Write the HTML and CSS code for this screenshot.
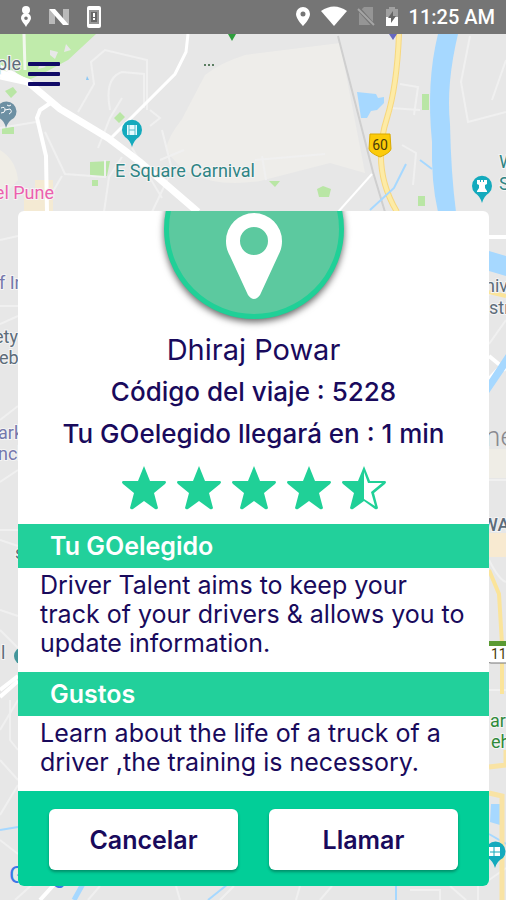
FILE: index.html
```html
<!DOCTYPE html>
<html lang="es">
<head>
    <meta charset="UTF-8">
    <meta name="viewport" content="width=device-width, initial-scale=1.0">
    <title>Tu GOelegido</title>
    <link rel="stylesheet" href="styles.css">
</head>
<body>
    <div class="statusbar">
        <div class="status-left">
            <svg width="12" height="24" viewBox="0 0 12 24" fill="#fff">
                <circle cx="6" cy="5" r="4"/>
                <path fill-rule="evenodd" d="M6 8a5 5 0 0 0-5 5c0 3 3 5 5 9 2-4 5-6 5-9a5 5 0 0 0-5-5zm0 3.500a1.800 1.800 0 1 1 0 3.600 1.800 1.800 0 0 1 0-3.600z"/>
            </svg>
            <svg width="22" height="24" viewBox="0 0 22 24">
                <path d="M1 5h6v14H1zM15 4h6v15h-6z" fill="#b9b9b9"/>
                <path d="M1 4h6l14 16h-6z" fill="#fff"/>
            </svg>
            <svg width="16" height="24" viewBox="0 0 16 24">
                <rect x="1" y="1" width="14" height="22" rx="2" fill="#fff"/>
                <path d="M3 5h10v14H3z" fill="#959595"/>
                <path d="M5 7h6v10H5z" fill="#666"/>
                <path d="M7 8h2v4H7zM7 13h2v2H7z" fill="#fff"/>
            </svg>
        </div>
        <div class="status-right">
            <svg width="16" height="22" viewBox="0 0 16 22">
                <path fill="#fff" fill-rule="evenodd" d="M8 1a7 7 0 0 0-7 7c0 5 7 12 7 12s7-7 7-12a7 7 0 0 0-7-7zm0 4.500a2.500 2.500 0 1 1 0 5 2.500 2.500 0 0 1 0-5z"/>
            </svg>
            <svg width="26" height="22" viewBox="0 0 26 22">
                <path fill="#fff" d="M0 5q13-9 26 0L13 20z"/>
            </svg>
            <svg width="18" height="22" viewBox="0 0 18 22">
                <path fill="#959595" d="M7 1h9v18H2V6z"/>
                <path d="M0 1l17 19" stroke="#757575" stroke-width="4"/>
                <path d="M1 3l16 16" stroke="#a5a5a5" stroke-width="2"/>
            </svg>
            <svg width="14" height="22" viewBox="0 0 14 22">
                <path fill="#a0a0a0" d="M4 1h6v2h3v8H1V3h3z"/>
                <path fill="#fff" d="M1 11h12v9H1z"/>
                <path fill="#666" d="M8 5l-5 7h3v5l5-7H8z"/>
            </svg>
            <span>11:25 AM</span>
        </div>
    </div>

    <div class="content">
        <svg class="map" viewBox="0 34 506 866" preserveAspectRatio="xMidYMin slice">
            <rect y="34" width="506" height="866" fill="#e7e7e7"/>
            <path d="M205 75q15-12 40-20l95-12 25 130-35-10-70 18q-70 10-94-32 2-12 16-30z" fill="#eeedea"/>
            <path d="M0 150q16 10 18 30l-18 20z" fill="#efede6"/>
            <path d="M35 180h18v32H24v-20h11z" fill="#f4ead3"/>
            <path d="M0 34h96L68 60 42 74 24 82 14 70 0 72z" fill="#c0ebab"/>
            <path d="M50 50l8 2-3 7-5-4zM66 44l5 6-7 2zM40 63l6 4-8 2z" fill="#e8e8e8"/>
            <path d="M5 91l8-4 4 5-6 6zM114 118l6-6 5 5-6 6zM90 162l20-1-3 15-17 1zM92 180h6v6h-6zM2 127h12v7H2zM269 181h11l-5 6zM317 189l6-3 8 3-2 8h-10zM422 94h7v16h-7zM418 196h7v10h-7z" fill="#b9e6a5"/>

            <g fill="none" stroke="#f0f0f0" stroke-width="2">
                <path d="M78 112l16-28-3-22 14-12 42 10v50M110 110q-6-32 12-38l22 2v34M98 148l12-30 12-20M0 128l36-6M45 132l20 42 40 3v-17M48 200l14-24M132 148l30 50M104 212l5-35 13-20M162 130l10 40-20 42M184 150l-24 10M150 110l10 8-10 8M255 160l70-6M262 156l4 24M400 84l18 3-4 28M390 108l30 2M402 145l14 8-3 32M470 36l-9 46 7 40 38-10M506 60l-14 40"/>
                <path d="M0 240l18-4M0 306h18M0 324l18-8M0 420l18-14M0 482l18-12M0 530h18M0 540l18 6M0 610l18 6M0 630l18 18M0 730l18-30M0 760l18 20M0 815l18-30M0 840l18 14M10 700v40l8 10"/>
                <path d="M489 270h17M489 295l17-10M489 344l17-24M489 480h17M489 560q10 20 17 22M489 690h17M489 880l17-12"/>
                <path d="M15 900l20-18M100 886l-12 14M176 886l4 14M220 900l14-14M300 886l-4 14M320 900l12-14M410 890h30v10M450 886l16 14M478 886v14"/>
            </g>
            <path d="M24 34l1 36" stroke="#f2f8ee" stroke-width="3"/>
            <path d="M0 78l28 6M0 66l34 18M188 34l-2 18-11 22-64 64" fill="none" stroke="#fff" stroke-width="3"/>
            <path d="M52 102l-12 8-3 8 9 38 1 56" fill="none" stroke="#fff" stroke-width="4"/>
            <path d="M0 73l28 9 32 27 48 29 32 24 58 50" fill="none" stroke="#fff" stroke-width="7"/>
            <path d="M0 690l18-14M0 697l18-16M489 237h17M489 379l17-18M489 356l17 14M40 900l20-22" stroke="#fff" stroke-width="4"/>
            <path d="M338 36l35 136 12 40" fill="none" stroke="#cfcfcf" stroke-width="2"/>
            <path d="M338 212l34-38" stroke="#fff" stroke-width="2"/>
            <path d="M399 34q-2 52-12 84-16 50 10 94" fill="none" stroke="#f7d77e" stroke-width="6"/>
            <path d="M399 34q-2 52-12 84-16 50 10 94" fill="none" stroke="#fdeba6" stroke-width="4"/>
            <path d="M438 34h20q-12 50-8 90 1 50 6 88h-18q-7-30-6-70-6-60 6-108z" fill="#a6d8ff"/>
            <path d="M357 92l19 2 2 4 6-1 0 6-7 7-6 1-4 7h-6z" fill="#a6d8ff"/>
            <path d="M370 210l24-22 12-24M420 160l12 9M0 830l18-3M489 834l17 10M208 900l20-16M396 900v-14" fill="none" stroke="#a6d8ff" stroke-width="2"/>
            <path d="M74 900l10-18" stroke="#a6d8ff" stroke-width="5"/>
            <path d="M87 76l2 4-3 0z" fill="#8cc8f5"/>
            <path d="M489 251l17 5v20l-17-5zM489 380l17-26v14l-17 25zM491 804h10l-1 21-10-3z" fill="#a6d8ff"/>
            <path d="M489 449h17v29h-17z" fill="#efede6"/>
            <path d="M489 533h17v24h-17z" fill="#f8ead1"/>
            <path d="M489 570l10 24 3 50v50M489 292l17 4" fill="none" stroke="#fbe49a" stroke-width="4"/>
            <path d="M489 767l17-2v-15M489 793l13 3v104" fill="none" stroke="#f9e3a4" stroke-width="5"/>

            <path d="M228 34h8l-4 7z" fill="#2e9e3c"/>
            <path d="M389 34h8l-4 6z" fill="#6668c0"/>
            <g fill="#2c5a35">
                <circle cx="205" cy="65" r="1"/>
                <circle cx="209" cy="65" r="1"/>
                <circle cx="213" cy="65" r="1"/>
            </g>

            <!-- road 60 -->
            <path d="M370 134h20l1 15q-1 4-11 8-10-4-11-8z" fill="#fccb0a" stroke="#d9a900"/>
            <text x="380" y="150" class="road" text-anchor="middle">60</text>

            <!-- map pins -->
            <path d="M132 147q-2-7-7-10a10 10 0 1 1 14 0q-5 3-7 10z" fill="#14aabd"/>
            <path d="M127 125h10v10h-10z" fill="#e5fbff"/>
            <path d="M129 125v10M135 125v10M129 130h6" stroke="#58bdca"/>
            <path d="M482 203q-2-7-7-10a10 10 0 1 1 14 0q-5 3-7 10z" fill="#14aabd"/>
            <path d="M477 180h3v2h1v-2h2v2h1v-2h3v4l-2 1v3l2 3v1h-10v-1l2-3v-3l-2-1z" fill="#fff"/>
            <path d="M6 128q-2-8-7-10a10 10 0 1 1 15 0q-6 3-8 10z" fill="#6d90a3"/>
            <path d="M1 108q4-2 4 2 0 3-4 3M5 110l5-1q3 3-1 5M7 105q2 2 4 0" fill="none" stroke="#fff" stroke-width="1"/>
            <path d="M495 868q-2-7-7-10a10 10 0 1 1 15 0q-6 3-8 10z" fill="#14aabd"/>
            <path d="M489 847h11v9h-11z" fill="#fff"/>
            <path d="M494 847v9M490 852h10" stroke="#14aabd"/>
            <circle cx="23" cy="656" r="9" fill="#43969b"/>

            <text x="21" y="70" class="place slate" text-anchor="end">ple</text>
            <text x="115" y="177" class="place teal">E Square Carnival</text>
            <text x="54" y="199" class="place pink" text-anchor="end">el Pune</text>
            <text x="499" y="168" class="place teal">W</text>
            <text x="499" y="190" class="place teal">S</text>
            <text x="-1" y="289" class="place violet">f In</text>
            <text x="18" y="343" class="place slate" text-anchor="end">ety</text>
            <text x="-1" y="364" class="place slate">eb</text>
            <text x="-2" y="439" class="place violet">ark</text>
            <text x="-2" y="460" class="place violet">ncl</text>
            <text x="1" y="659" class="place slate">l</text>
            <text x="15" y="559" class="place slate">s</text>
            <text x="485" y="292" class="place slate">niv</text>
            <text x="489" y="314" class="place slate">str</text>
            <text x="485" y="446" class="city">ne</text>
            <text x="482" y="531" class="place slate bold">WA</text>
            <text x="490" y="727" class="place green">ar</text>
            <text x="491" y="748" class="place green">eh</text>
            <rect x="486" y="643" width="30" height="20" rx="5" fill="#fff" stroke="#777"/>
            <path d="M489 641h17v5h-17z" fill="#5a9a32"/>
            <text x="491" y="659" class="road">11</text>
            <text x="9" y="883" class="google">Google</text>
        </svg>

        <button class="menu" type="button" aria-label="Menú">
            <span></span>
            <span></span>
            <span></span>
        </button>

        <div class="card">
            <div class="photo">
                <div class="circle">
                    <svg width="58" height="88" viewBox="0 0 58 88">
                        <path fill="#fff" fill-rule="evenodd" d="M29 1A28 28 0 0 0 1 29c0 7 2 11 4 15l18 39q6 8 12 0l18-39c2-4 4-8 4-15A28 28 0 0 0 29 1zm0 14a14 14 0 1 1 0 28 14 14 0 0 1 0-28z"/>
                    </svg>
                </div>
            </div>

            <div class="details">
                <h1>Dhiraj Powar</h1>
                <p>Código del viaje : 5228</p>
                <p>Tu GOelegido llegará en : 1 min</p>
                <div class="stars">
                    <svg viewBox="0 0 46 45"><path d="M23 1l6 15h15q2 1 0 3L33 28l4 15q-1 2-3 1l-11-8-11 8q-2 1-3-1l4-15L2 19q-2-2 0-3h15z"/></svg>
                    <svg viewBox="0 0 46 45"><path d="M23 1l6 15h15q2 1 0 3L33 28l4 15q-1 2-3 1l-11-8-11 8q-2 1-3-1l4-15L2 19q-2-2 0-3h15z"/></svg>
                    <svg viewBox="0 0 46 45"><path d="M23 1l6 15h15q2 1 0 3L33 28l4 15q-1 2-3 1l-11-8-11 8q-2 1-3-1l4-15L2 19q-2-2 0-3h15z"/></svg>
                    <svg viewBox="0 0 46 45"><path d="M23 1l6 15h15q2 1 0 3L33 28l4 15q-1 2-3 1l-11-8-11 8q-2 1-3-1l4-15L2 19q-2-2 0-3h15z"/></svg>
                    <svg viewBox="0 0 46 45"><path fill-rule="evenodd" d="M23 1l6 15h15q2 1 0 3L33 28l4 15q-1 2-3 1l-11-8-11 8q-2 1-3-1l4-15L2 19q-2-2 0-3h15zM23 7v27l11 7-4-14 11-9H27z"/></svg>
                </div>
            </div>

            <h2>Tu GOelegido</h2>
            <p class="text">Driver Talent aims to keep your<br>track of your drivers &amp; allows you to<br>update information.</p>

            <h2>Gustos</h2>
            <p class="text">Learn about the life of a truck of a<br>driver ,the training is necessory.</p>

            <div class="actions">
                <button type="button">Cancelar</button>
                <button type="button">Llamar</button>
            </div>
        </div>
    </div>
</body>
</html>
```

FILE: styles.css
```css
* {
    box-sizing: border-box;
}

body {
    font-family: Inter, "Open Sans", sans-serif;
    color: #190a5c;
    display: flex;
    flex-direction: column;
    min-height: 100vh;
    margin: 0;
}

h1, h2, p {
    margin: 0;
}

.statusbar {
    display: flex;
    justify-content: space-between;
    align-items: center;
    height: 34px;
    padding: 0 11px 0 20px;
    background-color: #757575;
    color: #fff;
    font-family: Roboto, sans-serif;
    font-size: 20px;
    font-weight: 500;
}

.status-left {
    display: flex;
    align-items: center;
    gap: 16px;
}

.status-right {
    display: flex;
    align-items: center;
    gap: 10px;
}

.content {
    position: relative;
    flex: 1;
    display: flex;
    flex-direction: column;
    align-items: stretch;
    overflow: hidden;
}

/* the map lies under the menu and the card */
.map {
    position: absolute;
    top: 0;
    left: 0;
    width: 100%;
    height: 100%;
}

.place {
    font-family: Roboto, sans-serif;
    font-size: 18px;
    stroke: #f4f4f4;
    stroke-width: 2px;
    paint-order: stroke;
}

.road {
    font-family: Roboto, sans-serif;
    font-size: 14px;
    fill: #4a3d0a;
}

.city {
    font-family: Roboto, sans-serif;
    font-size: 28px;
    font-weight: 300;
    fill: #8a8a8f;
}

.google {
    font-family: Roboto, sans-serif;
    font-size: 24px;
    fill: #3b78e7;
}

.teal { fill: #2f8484; }
.pink { fill: #ec5fae; }
.slate { fill: #5d6c7a; }
.violet { fill: #7578ac; }
.green { fill: #2f8a3a; }
.bold { font-weight: 500; }

.menu {
    position: relative;
    display: flex;
    flex-direction: column;
    gap: 6px;
    width: 32px;
    margin: 28px 0 0 28px;
    padding: 0;
    border: none;
    background: none;
}

.menu span {
    height: 4px;
    border-radius: 1px;
    background-color: #100a66;
}

.card {
    position: relative;
    margin: auto 17px 14px 18px;
    border-radius: 6px;
    background-color: #fff;
    overflow: hidden;
}

.photo {
    display: flex;
    justify-content: center;
    align-items: flex-end;
    height: 108px;
}

.circle {
    display: flex;
    justify-content: center;
    align-items: flex-end;
    flex-shrink: 0;
    width: 180px;
    height: 180px;
    padding-bottom: 14px;
    border: 5px solid #20d097;
    border-radius: 50%;
    background-color: #5cc99f;
    box-shadow: 0 3px 7px rgba(0, 0, 0, 0.6);
}

.details {
    padding: 10px 0 14px;
    text-align: center;
    font-size: 26px;
    font-weight: 500;
    line-height: 42px;
}

.details h1 {
    font-size: 29px;
    font-weight: 400;
}

.stars {
    display: flex;
    justify-content: center;
    gap: 9px;
    margin-top: 10px;
}

.stars svg {
    width: 46px;
    height: 45px;
    fill: #20d097;
}

h2 {
    padding: 0 32px;
    background-color: #22d09b;
    color: #fff;
    font-size: 25px;
    font-weight: 600;
    line-height: 44px;
}

.text {
    padding: 3px 0 14px 22px;
    font-size: 25px;
    line-height: 29px;
}

.actions {
    display: flex;
    gap: 31px;
    padding: 18px 31px 16px;
    background-color: #02ce98;
}

.actions button {
    flex: 1;
    height: 61px;
    border: none;
    border-radius: 6px;
    background-color: #fff;
    box-shadow: 0 2px 3px rgba(0, 0, 0, 0.3);
    color: #190a5c;
    font-family: inherit;
    font-size: 25px;
    font-weight: 600;
}
```
